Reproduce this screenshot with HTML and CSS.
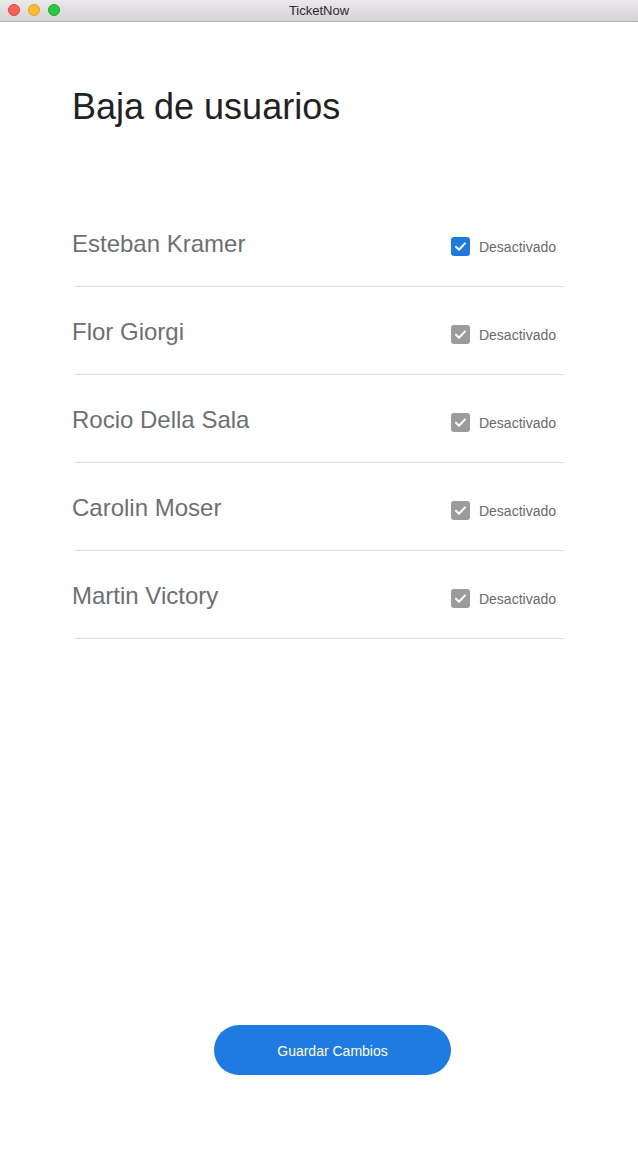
FILE: index.html
```html
<!DOCTYPE html>
<html lang="es">
<head>
<meta charset="utf-8">
<title>TicketNow</title>
<link rel="stylesheet" href="styles.css">
</head>
<body>
<div class="titlebar">
  <div class="lights">
    <span class="light red"></span>
    <span class="light yellow"></span>
    <span class="light green"></span>
  </div>
  <div class="title">TicketNow</div>
</div>
<main class="page">
  <h1 class="heading">Baja de usuarios</h1>
  <ul class="list">
    <li class="row">
      <div class="line">
        <span class="name">Esteban Kramer</span>
        <label class="status"><span class="box active"><svg viewBox="0 0 19 19" width="19" height="19"><path d="M5 9.8l3 3 6-6.4" fill="none" stroke="#fff" stroke-width="2" stroke-linecap="round" stroke-linejoin="round"/></svg></span><span class="status-text">Desactivado</span></label>
      </div>
    </li>
    <li class="row">
      <div class="line">
        <span class="name">Flor Giorgi</span>
        <label class="status"><span class="box"><svg viewBox="0 0 19 19" width="19" height="19"><path d="M5 9.8l3 3 6-6.4" fill="none" stroke="#fff" stroke-width="2" stroke-linecap="round" stroke-linejoin="round"/></svg></span><span class="status-text">Desactivado</span></label>
      </div>
    </li>
    <li class="row">
      <div class="line">
        <span class="name">Rocio Della Sala</span>
        <label class="status"><span class="box"><svg viewBox="0 0 19 19" width="19" height="19"><path d="M5 9.8l3 3 6-6.4" fill="none" stroke="#fff" stroke-width="2" stroke-linecap="round" stroke-linejoin="round"/></svg></span><span class="status-text">Desactivado</span></label>
      </div>
    </li>
    <li class="row">
      <div class="line">
        <span class="name">Carolin Moser</span>
        <label class="status"><span class="box"><svg viewBox="0 0 19 19" width="19" height="19"><path d="M5 9.8l3 3 6-6.4" fill="none" stroke="#fff" stroke-width="2" stroke-linecap="round" stroke-linejoin="round"/></svg></span><span class="status-text">Desactivado</span></label>
      </div>
    </li>
    <li class="row">
      <div class="line">
        <span class="name">Martin Victory</span>
        <label class="status"><span class="box"><svg viewBox="0 0 19 19" width="19" height="19"><path d="M5 9.8l3 3 6-6.4" fill="none" stroke="#fff" stroke-width="2" stroke-linecap="round" stroke-linejoin="round"/></svg></span><span class="status-text">Desactivado</span></label>
      </div>
    </li>
  </ul>
  <button class="save" type="button">Guardar Cambios</button>
</main>
</body>
</html>
```

FILE: styles.css
```css
* { box-sizing: border-box; }
html, body {
  margin: 0;
  padding: 0;
  background: #ffffff;
  font-family: "Liberation Sans", Arial, sans-serif;
}
.titlebar {
  height: 22px;
  display: flex;
  align-items: center;
  justify-content: center;
  position: relative;
  background: linear-gradient(#ebe9eb, #d5d3d5);
  border-bottom: 1px solid #b3b1b3;
}
.lights {
  position: absolute;
  left: 8px;
  top: 4px;
  display: flex;
  gap: 8px;
}
.light {
  width: 12px;
  height: 12px;
  border-radius: 50%;
  display: block;
}
.red { background: #fe5f57; border: 0.5px solid #e0443e; }
.yellow { background: #febc2e; border: 0.5px solid #dea123; }
.green { background: #28c840; border: 0.5px solid #1aab29; }
.title {
  font-size: 13px;
  color: #2b2b2b;
  line-height: 20px;
}
.page {
  padding-left: 72px;
}
.heading {
  margin: 64px 0 0 0;
  font-size: 36px;
  line-height: 42px;
  font-weight: normal;
  color: #222222;
}
.list {
  list-style: none;
  margin: 71px 0 0 0;
  padding: 0;
  width: 492px;
}
.row {
  padding: 31px 0 0 0;
}
.row::after {
  content: "";
  display: block;
  height: 1px;
  background: #dcdcdc;
  margin-left: 3px;
  margin-top: 28px;
}
.line {
  height: 28px;
  display: flex;
  align-items: center;
  justify-content: space-between;
}
.name {
  font-size: 24px;
  line-height: 28px;
  color: #6f6f72;
}
.status {
  display: flex;
  align-items: center;
  gap: 9px;
  padding-right: 8px;
  padding-top: 5px;
}
.box {
  width: 19px;
  height: 19px;
  border-radius: 3px;
  background: #9b9b9b;
  display: block;
}
.box svg { display: block; }
.box.active { background: #1f7ae0; }
.status-text {
  font-size: 14px;
  color: #6a6a6a;
  line-height: 16px;
}
.save {
  display: block;
  margin: 386px 0 0 142px;
  width: 237px;
  height: 50px;
  border: none;
  border-radius: 25px;
  background: #1f7be2;
  color: #ffffff;
  font-family: "Liberation Sans", Arial, sans-serif;
  font-size: 14px;
  padding: 1px 0 0 0;
}
```
